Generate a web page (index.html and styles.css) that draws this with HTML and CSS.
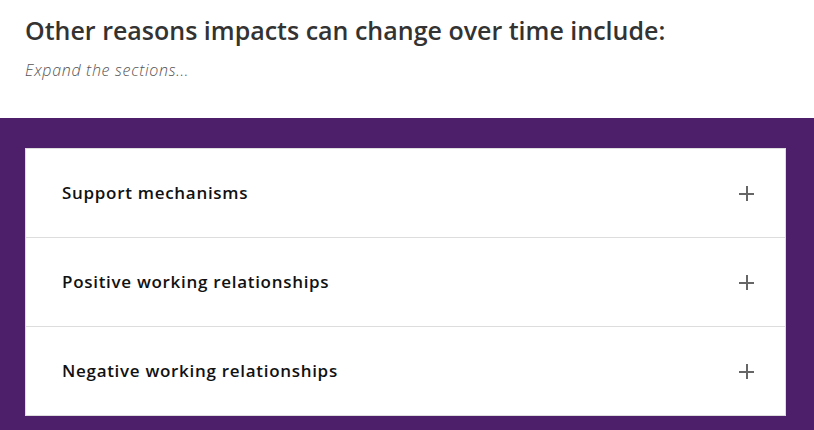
FILE: index.html
```html
<!DOCTYPE html>
<html lang="en">
<head>
    <meta charset="UTF-8">
    <title>Other reasons impacts can change over time</title>
    <link rel="stylesheet" href="styles.css">
</head>
<body>
    <div class="intro">
        <h2>Other reasons impacts can change over time include:</h2>
        <p class="hint">Expand the sections...</p>
    </div>
    <div class="band">
        <div class="accordion">
            <div class="item">
                <span class="title">Support mechanisms</span>
                <span class="plus"></span>
            </div>
            <div class="item">
                <span class="title">Positive working relationships</span>
                <span class="plus"></span>
            </div>
            <div class="item">
                <span class="title">Negative working relationships</span>
                <span class="plus"></span>
            </div>
        </div>
    </div>
</body>
</html>
```

FILE: styles.css
```css
body {
    font-family: "Open Sans", "DejaVu Sans", sans-serif;
    margin: 0;
    background: #fff;
}
.intro {
    padding: 13px 25px 0;
    height: 105px;
}
h2 {
    margin: 0;
    font-size: 25px;
    font-weight: 600;
    color: #333;
}
.hint {
    margin: 12px 0 0;
    font-size: 16px;
    font-style: italic;
    font-weight: 300;
    color: #555;
    letter-spacing: 0.7px;
}
.band {
    background: #4d1f6b;
    padding: 30px 28px 15px 25px;
}
.accordion {
    background: #fff;
    border: 1px solid #ddd;
}
.item {
    display: flex;
    justify-content: space-between;
    align-items: center;
    height: 88px;
    padding: 0 31px 0 36px;
    border-top: 1px solid #ddd;
}
.item:first-child {
    border-top: none;
}
.title {
    font-size: 17px;
    font-weight: 600;
    color: #111;
    letter-spacing: 0.7px;
    margin-top: -2px;
}
.plus {
    position: relative;
    width: 15px;
    height: 15px;
}
.plus::before, .plus::after {
    content: '';
    position: absolute;
    background: #666;
}
.plus::before {
    left: 0;
    right: 0;
    top: 7px;
    height: 2px;
}
.plus::after {
    top: 0;
    bottom: 0;
    left: 7px;
    width: 2px;
}
```
